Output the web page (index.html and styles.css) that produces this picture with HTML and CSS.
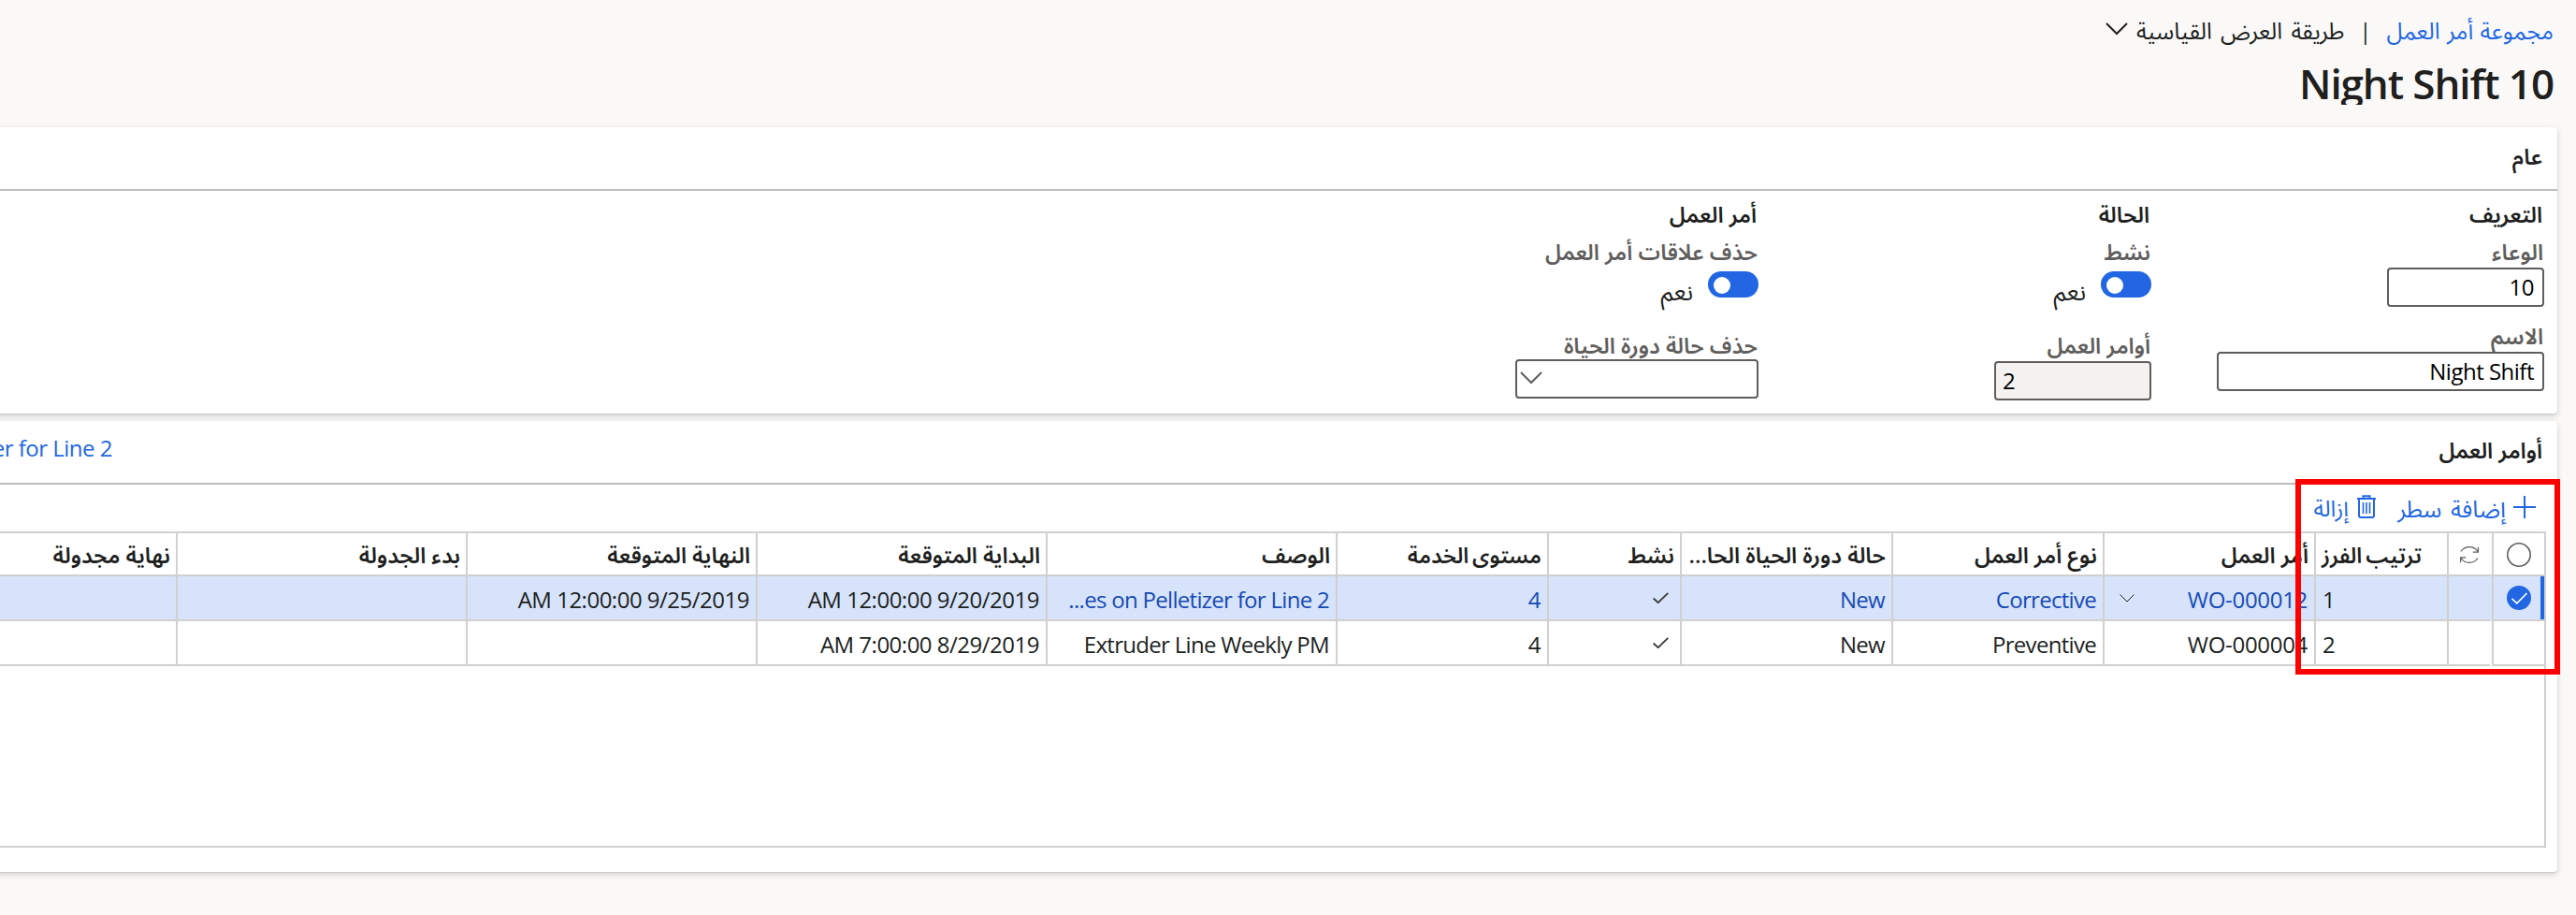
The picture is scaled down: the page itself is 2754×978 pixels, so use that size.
FILE: index.html
```
<!DOCTYPE html>
<html lang="ar" dir="rtl">
<head>
<meta charset="utf-8">
<title>Night Shift 10</title>
<link rel="stylesheet" href="styles.css">
</head>
<body>
<header class="page-head">
  <div class="crumbs">
    <a class="crumb-link">مجموعة أمر العمل</a>
    <span class="crumb-sep">|</span>
    <span class="crumb-view">طريقة العرض القياسية</span>
    <svg class="crumb-chevron" viewBox="0 0 24 14"><path d="M1 1l11 11L23 1"/></svg>
  </div>
  <h1 class="page-title"><bdi class="latin">Night Shift 10</bdi></h1>
</header>

<section class="card general">
  <div class="card-head"><h2>عام</h2></div>
  <div class="form">
    <div class="group">
      <h3>التعريف</h3>
      <label>الوعاء</label>
      <div class="input short"><span class="latin">10</span></div>
      <label class="next">الاسم</label>
      <div class="input long"><bdi class="latin">Night Shift</bdi></div>
    </div>
    <div class="group">
      <h3>الحالة</h3>
      <label>نشط</label>
      <div class="toggle-row"><span class="toggle"></span><span class="toggle-text">نعم</span></div>
      <label>أوامر العمل</label>
      <div class="input short readonly"><span class="latin">2</span></div>
    </div>
    <div class="group">
      <h3>أمر العمل</h3>
      <label>حذف علاقات أمر العمل</label>
      <div class="toggle-row"><span class="toggle"></span><span class="toggle-text">نعم</span></div>
      <label>حذف حالة دورة الحياة</label>
      <div class="input select"><svg viewBox="0 0 24 14"><path d="M1 1l11 11L23 1"/></svg></div>
    </div>
  </div>
</section>

<section class="card orders">
  <div class="card-head"><h2>أوامر العمل</h2><a class="summary"><bdi class="latin">er for Line 2</bdi></a></div>
  <div class="toolbar">
    <svg class="plus" viewBox="0 0 24 24"><path d="M12 0v24M0 12h24"/></svg>
    <a class="add">إضافة سطر</a>
    <svg class="trash" viewBox="0 0 20 25"><path d="M0 4h20M6.500 4V1.200h7V4M2 4v18q0 2 2 2h12q2 0 2-2V4"/><path class="bars" d="M6.500 8v12M10 8v12M13.500 8v12"/></svg>
    <a>إزالة</a>
  </div>
  <div class="grid">
    <div class="row head">
      <div class="cell c-sel"><svg class="ring" viewBox="0 0 26 26"><circle cx="13" cy="13" r="12.200"/></svg></div>
      <div class="cell c-ref"><svg class="refresh" viewBox="0 0 20 18"><path d="M1 5.500C5-1 15-1 19 5.500M19.400.8v5.400h-5.600M19 12.500c-4 6.500-14 6.500-18 0M.6 17.200v-5.400h5.600"/></svg></div>
      <div class="cell c-sort tight">ترتيب الفرز</div>
      <div class="cell c-m">أمر العمل</div>
      <div class="cell c-m">نوع أمر العمل</div>
      <div class="cell c-m">حالة دورة الحياة الحا...</div>
      <div class="cell c-s">نشط</div>
      <div class="cell c-m tight">مستوى الخدمة</div>
      <div class="cell c-l">الوصف</div>
      <div class="cell c-l">البداية المتوقعة</div>
      <div class="cell c-l">النهاية المتوقعة</div>
      <div class="cell c-l">بدء الجدولة</div>
      <div class="cell c-last">نهاية مجدولة</div>
    </div>
    <div class="row selected">
      <div class="cell c-sel"><svg class="ring on" viewBox="0 0 26 26"><circle cx="13" cy="13" r="13"/><path d="M5.500 13.800l5.300 5L21.500 8"/></svg></div>
      <div class="cell c-ref"></div>
      <div class="cell c-sort"><span class="latin">1</span></div>
      <div class="cell c-m link split"><bdi class="latin code">WO-000012</bdi><svg class="drop" viewBox="0 0 16 9"><path d="M.5.500L8 8 15.500.500"/></svg></div>
      <div class="cell c-m link"><bdi class="latin name">Corrective</bdi></div>
      <div class="cell c-m link"><bdi class="latin name">New</bdi></div>
      <div class="cell c-s"><svg class="tick" viewBox="0 0 17 12"><path d="M.7 6.500l5 4.700L16.300.800"/></svg></div>
      <div class="cell c-m link"><span class="latin">4</span></div>
      <div class="cell c-l link"><bdi class="latin name">...es on Pelletizer for Line 2</bdi></div>
      <div class="cell c-l"><bdi class="latin">AM 12:00:00 9/20/2019</bdi></div>
      <div class="cell c-l"><bdi class="latin">AM 12:00:00 9/25/2019</bdi></div>
      <div class="cell c-l"></div>
      <div class="cell c-last"></div>
    </div>
    <div class="row">
      <div class="cell c-sel"></div>
      <div class="cell c-ref"></div>
      <div class="cell c-sort"><span class="latin">2</span></div>
      <div class="cell c-m"><bdi class="latin code">WO-000004</bdi></div>
      <div class="cell c-m"><bdi class="latin name">Preventive</bdi></div>
      <div class="cell c-m"><bdi class="latin name">New</bdi></div>
      <div class="cell c-s"><svg class="tick" viewBox="0 0 17 12"><path d="M.7 6.500l5 4.700L16.300.800"/></svg></div>
      <div class="cell c-m"><span class="latin">4</span></div>
      <div class="cell c-l"><bdi class="latin name">Extruder Line Weekly PM</bdi></div>
      <div class="cell c-l"><bdi class="latin">AM 7:00:00 8/29/2019</bdi></div>
      <div class="cell c-l"></div>
      <div class="cell c-l"></div>
      <div class="cell c-last"></div>
    </div>
  </div>
</section>
<div class="highlight"></div>
</body>
</html>
```
FILE: styles.css
```
* { box-sizing: border-box; }
body {
  margin: 0;
  height: 978px;
  overflow: hidden;
  background: #faf9f8;
  color: #201f1e;
  font: 24px/34px "Open Sans", "Noto Sans Arabic", "Noto Sans", sans-serif;
  white-space: nowrap;
}
h1, h2, h3 { margin: 0; font-size: 23.5px; font-weight: 600; }
svg { display: block; flex: none; fill: none; stroke: currentColor; }
a { color: #2266e3; }
.latin { letter-spacing: -0.5px; direction: ltr; }
.name { letter-spacing: -0.7px; }
.code { letter-spacing: -0.3px; }

.page-head { height: 136px; padding: 16px 24px 0 0; }
.crumbs { display: flex; }
.crumb-link { font-size: 24.5px; word-spacing: 1px; }
.crumb-sep { margin: 0 16px; }
.crumb-view { font-size: 24.5px; word-spacing: 3px; }
.crumb-chevron { width: 24px; height: 14px; margin: 8px 9px 0 0; stroke-width: 2; }
.page-title { height: 47px; margin-top: 15px; overflow: hidden; font-size: 44px; line-height: 48px; }
.page-title .latin { letter-spacing: -1.1px; }

.card {
  margin-right: 20px;
  margin-left: -20px;
  background: #fff;
  border-radius: 4px;
  box-shadow: 0 3px 7px rgba(0, 0, 0, .14), 0 1px 2px rgba(0, 0, 0, .12);
}
.card-head {
  display: flex;
  justify-content: space-between;
  height: 68px;
  padding-right: 16px;
  border-bottom: 2px solid #bebbb8;
  line-height: 62px;
}
.general { height: 306px; margin-bottom: 8px; }
.orders { height: 482px; }
.summary { width: 140px; line-height: 58px; }

.form { display: flex; padding: 5px 14px 0 0; }
.group { width: 420px; }
.group h3 { padding-right: 2px; line-height: 40px; margin-bottom: 3px; }
.group label { display: block; padding-right: 1px; font-size: 23.5px; font-weight: 600; color: #605e5c; }
.group .next { margin-top: 14px; }
.input {
  height: 42px;
  padding: 0 9px;
  border: 2px solid #605e5c;
  border-radius: 4px;
  color: #000;
  line-height: 37px;
}
.short { width: 168px; }
.long { width: 350px; }
.readonly { background: #f3f2f1; text-align: left; padding: 0 7px; }
.select { width: 260px; margin-top: -2px; padding: 11px 3px; color: #605e5c; }
.select svg { width: 24px; height: 14px; margin-right: auto; stroke-width: 2; }
.toggle-row { display: flex; height: 66px; padding-top: 4px; }
.toggle { width: 54px; height: 28px; padding: 6px 30px 0 0; border-radius: 14px; background: #2266e3; }
.toggle::before { content: ""; display: block; width: 18px; height: 18px; border-radius: 50%; background: #fff; }
.toggle-text { margin: 4px 16px 0 0; font-size: 25.5px; }

.toolbar { display: flex; height: 50px; padding: 8px 15px 0 0; color: #2266e3; }
.plus { width: 24px; height: 24px; margin: 4px 8px 0 0; stroke-width: 2; }
.add { width: 117px; margin: 0 8px 0 22px; font-size: 25px; word-spacing: 3px; }
.trash { width: 20px; height: 25px; margin: 3px 0 0 9px; stroke-width: 2; }
.trash .bars { stroke-width: 1.6; }

.grid { height: 338px; margin-right: 12px; border: solid #d2d0ce; border-width: 2px 2px 2px 0; }
.row { display: flex; height: 48px; }
.head { height: 46px; font-size: 23.5px; font-weight: 600; }
.cell {
  flex: none;
  padding: 8px 7px 0;
  border-left: 2px solid #d2d0ce;
  border-bottom: 2px solid #d2d0ce;
}
.head .cell { padding: 6px 6px 0; }
.head .tight { font-size: 23px; word-spacing: -2px; }
.c-sel { width: 56px; }
.c-ref { width: 48px; }
.row:not(.head) .c-ref { width: 46px; margin-right: 2px; }
.c-sort { width: 142px; text-align: left; }
.c-s { width: 142px; }
.c-m { width: 226px; }
.c-l { width: 310px; }
.c-last { width: 210px; border-left: 0; }
.selected { background: linear-gradient(to left, #2266e3 4px, #d7e3fb 4px); }
.link { color: #164ab5; }
.split { display: flex; justify-content: space-between; }
.drop { width: 16px; height: 9px; margin: 11px 0 0 9px; color: #201f1e; }
.tick { width: 17px; height: 12px; margin: 9px 5px 0 0; stroke-width: 1.8; color: #3b3a39; }
.ring { width: 26px; height: 26px; stroke-width: 1.6; color: #605e5c; }
.head .c-sel { padding: 10px 14px 0 0; }
.selected .c-sel { padding: 10px 14px 0 0; }
.on circle { fill: #2266e3; stroke: none; }
.on path { stroke: #fff; }
.head .c-ref { padding: 14px 14px 0 0; }
.refresh { width: 20px; height: 18px; stroke-width: 1.2; color: #605e5c; }

.highlight { position: absolute; left: 2454px; top: 512px; width: 283px; height: 209px; border: 6px solid #f00; }
```
